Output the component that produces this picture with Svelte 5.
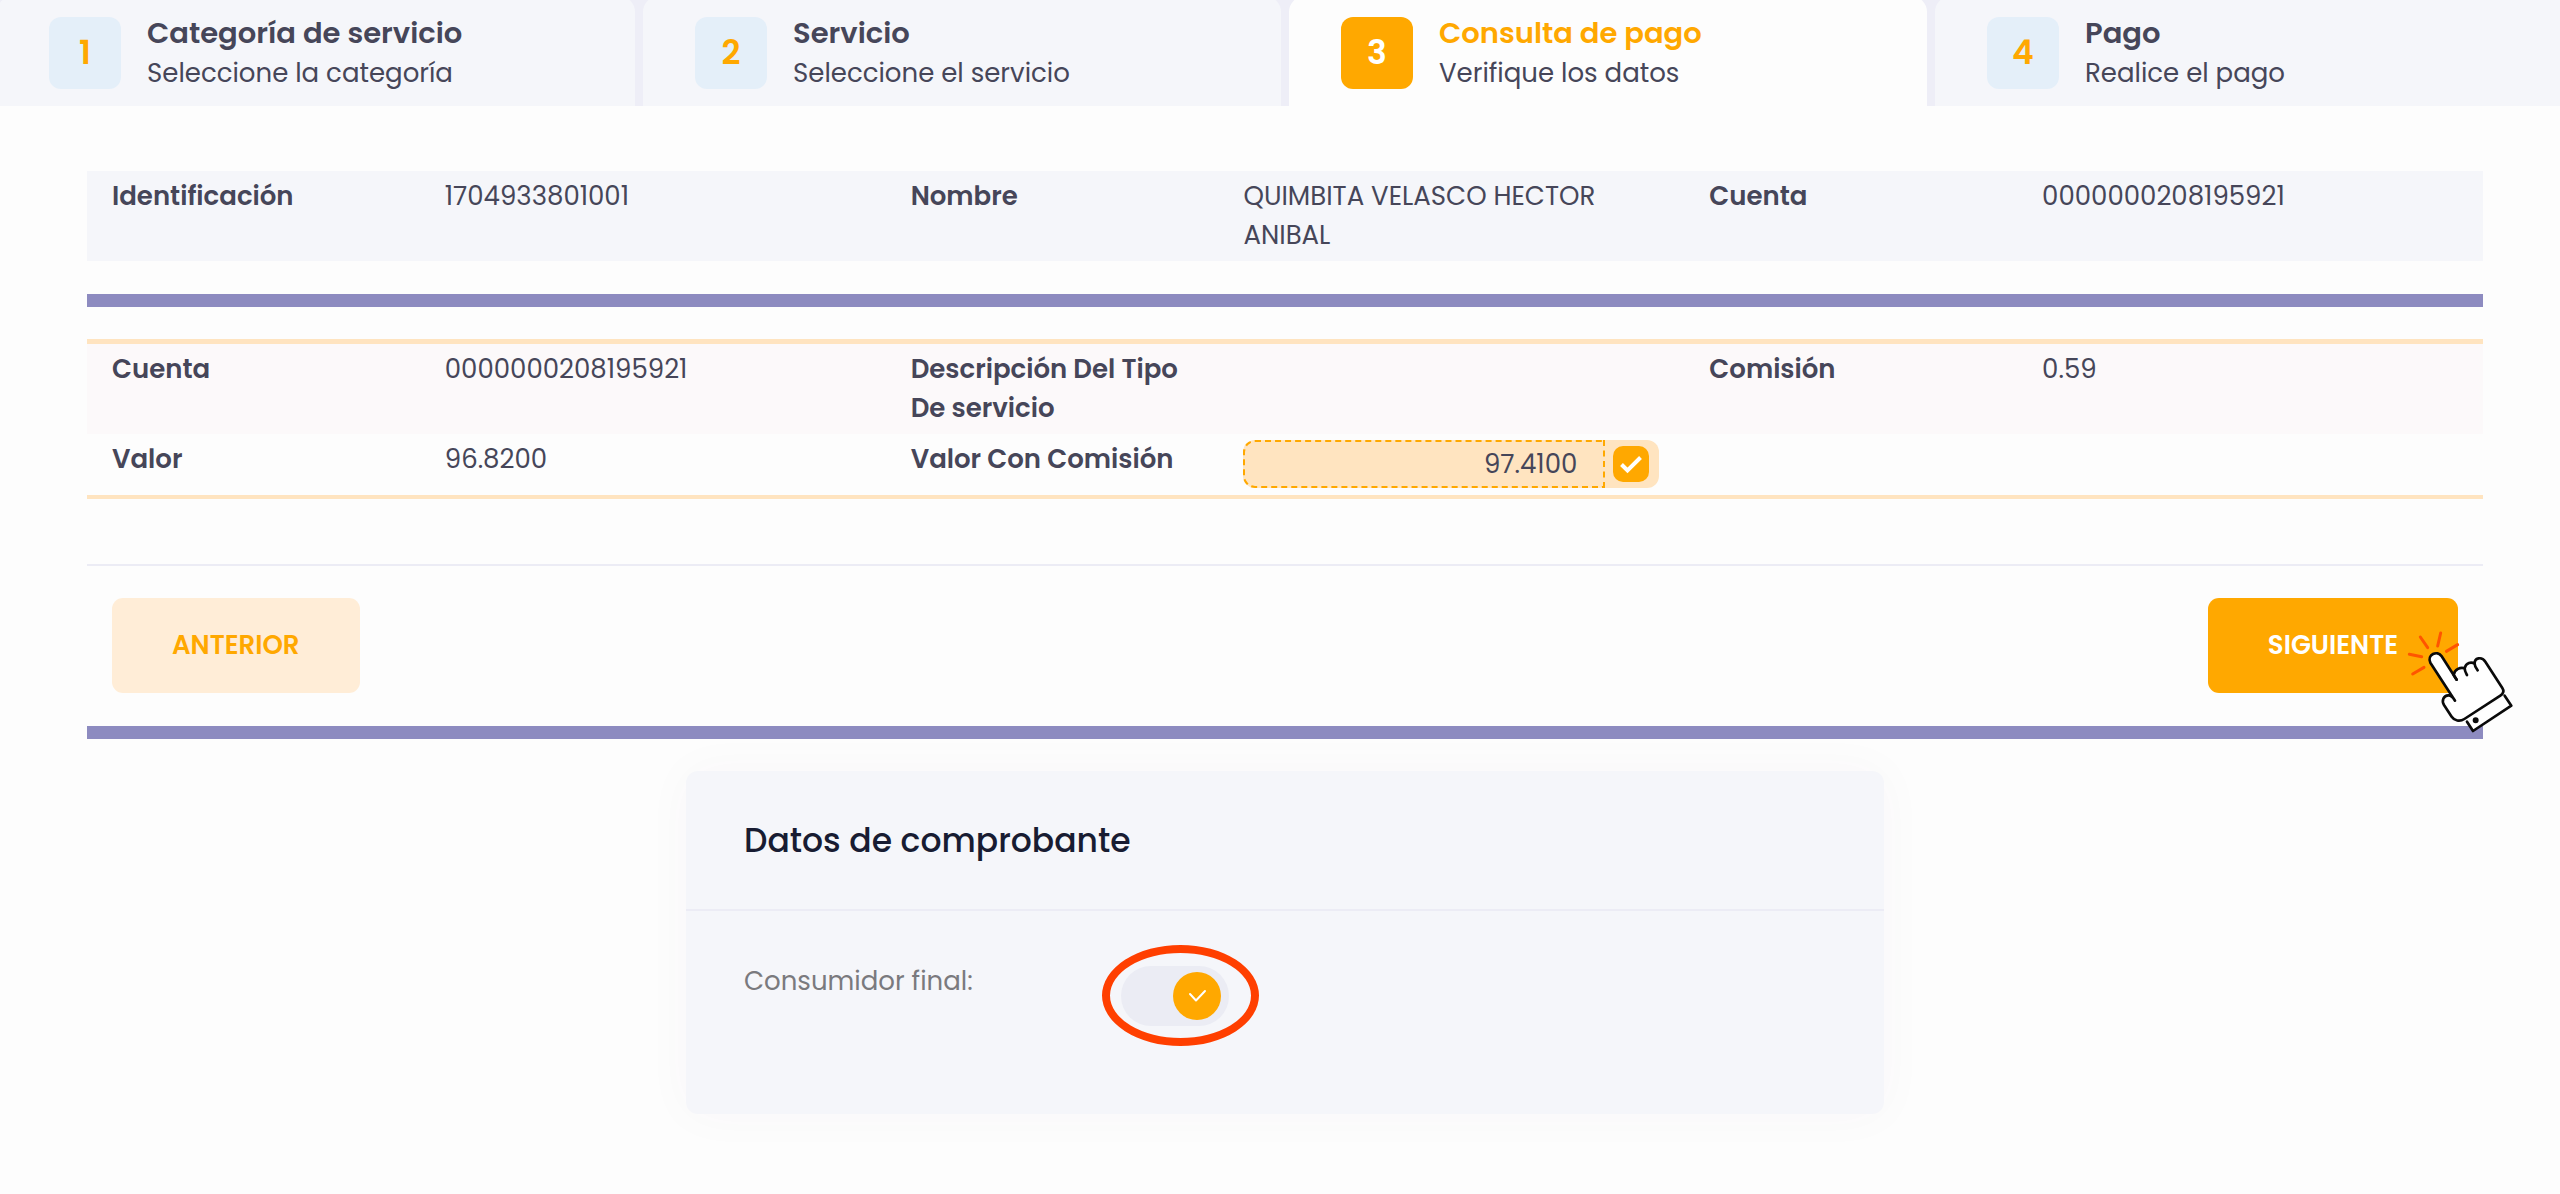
<script>
	const steps = [
		{ title: 'Categoría de servicio', hint: 'Seleccione la categoría' },
		{ title: 'Servicio', hint: 'Seleccione el servicio' },
		{ title: 'Consulta de pago', hint: 'Verifique los datos' },
		{ title: 'Pago', hint: 'Realice el pago' }
	];

	const cliente = [
		['Identificación', '1704933801001'],
		['Nombre', 'QUIMBITA VELASCO HECTOR ANIBAL'],
		['Cuenta', '0000000208195921']
	];

	const detalle = [
		['Cuenta', '0000000208195921'],
		['Descripción Del Tipo De servicio', ''],
		['Comisión', '0.59']
	];

	let current = $state(2);
	let valor = $state('97.4100');
	let pagar = $state(true);
	let consumidorFinal = $state(true);
</script>

<div class="wizard">
	<nav>
		<ol class="steps">
			{#each steps as step, i}
				<li>
					<a
						href="#paso-{i + 1}"
						class="step"
						aria-current={i === current ? 'step' : undefined}
						onclick={() => (current = i)}
					>
						<span class="number">{i + 1}</span>
						<span class="text">
							<strong>{step.title}</strong>
							<span>{step.hint}</span>
						</span>
					</a>
				</li>
			{/each}
		</ol>
	</nav>

	<main>
		<dl class="row shaded">
			{#each cliente as [label, value]}
				<dt>{label}</dt>
				<dd>{value}</dd>
			{/each}
		</dl>

		<div class="bar"></div>

		<dl class="detail">
			<div class="row tinted">
				{#each detalle as [label, value]}
					<dt>{label}</dt>
					<dd>{value}</dd>
				{/each}
			</div>
			<div class="row">
				<dt>Valor</dt>
				<dd>96.8200</dd>
				<dt><label for="valor">Valor Con Comisión</label></dt>
				<dd class="amount">
					<input id="valor" type="text" bind:value={valor} />
					<span class="tick">
						<input type="checkbox" aria-label="Pagar valor" bind:checked={pagar} />
						<svg viewBox="0 0 36 36" aria-hidden="true">
							<path d="M8.5 18.5 14.5 24.5 27.5 11.5" />
						</svg>
					</span>
				</dd>
			</div>
		</dl>

		<div class="actions">
			<button type="button" class="prev">ANTERIOR</button>
			<div class="next-wrap">
				<button type="button" class="next">SIGUIENTE</button>
				<svg class="pointer" viewBox="680 210 321 309" aria-hidden="true">
					<g class="rays">
						<path d="M720 231 742 263M781 219 772 258M832 254 798 274M687 283 724 290M697 342 731 322" />
					</g>
					<g class="hand">
						<path d="M860 485 878 513 993 437 973 407" />
						<path d="M829 359 784 289C771 269 739 284 750 308L824 422C812 400 795 404 789 416C786 423 788 430 791 435L814 470C822 482 838 486 852 477L960 407C969 401 972 393 966 384L915 305C904 288 882 294 883 311C873 305 857 307 853 325C841 320 822 328 820 345Z" />
						<path d="M829 359 820 345M853 325C853 334 856 338 860 345M883 311C883 320 887 325 892 331" />
						<circle cx="886" cy="481" r="5" />
					</g>
				</svg>
			</div>
		</div>

		<div class="bar"></div>

		<section class="card">
			<h2>Datos de comprobante</h2>
			<div class="field">
				<label for="consumidor">Consumidor final:</label>
				<div>
					<span class="switch">
						<input id="consumidor" type="checkbox" role="switch" bind:checked={consumidorFinal} />
						<svg viewBox="0 0 48 48" aria-hidden="true">
							<path d="M17 22 23 28.5 32 19" />
						</svg>
						<span class="ring"></span>
					</span>
				</div>
			</div>
		</section>
	</main>
</div>

<style>
	:global(body) {
		margin: 0;
		background: #fdfdfd;
	}

	.wizard {
		overflow: hidden;
		font-family: Poppins, Inter, sans-serif;
		font-size: 26px;
		line-height: 39px;
		color: #464659;
	}

	/* the stepper bleeds past both edges of the frame */
	.steps {
		display: flex;
		gap: 8px;
		margin: -4px -13px 0 -3px;
		padding: 0;
		list-style: none;
		background: #eeeef7;
	}

	li {
		flex: 1;
	}

	.step {
		display: flex;
		align-items: center;
		gap: 26px;
		padding: 16px 52px 13px;
		border-radius: 16px 16px 0 0;
		background: #f5f6fa;
		color: inherit;
		text-decoration: none;
	}

	.number {
		display: flex;
		align-items: center;
		justify-content: center;
		width: 72px;
		height: 72px;
		border-radius: 12px;
		background: #e4eff9;
		color: #ffa800;
		font-size: 33px;
		font-weight: 600;
	}

	.text {
		display: flex;
		flex-direction: column;
	}

	.text strong {
		font-size: 29px;
		font-weight: 600;
		line-height: 42px;
	}

	[aria-current] {
		background: #fdfdfd;
	}

	[aria-current] .number {
		background: #ffa800;
		color: #fff;
	}

	[aria-current] strong {
		color: #ffa800;
	}

	main {
		padding: 65px 77px 80px 87px;
	}

	dl,
	dd {
		margin: 0;
	}

	.row {
		display: grid;
		grid-template-columns: repeat(3, minmax(0, 5fr) minmax(0, 7fr));
		padding: 6px 0;
	}

	dt,
	dd {
		padding: 0 25px;
	}

	dt {
		font-weight: 600;
	}

	.shaded {
		background: #f5f6fa;
	}

	.tinted {
		background: #fcf9fa;
	}

	.bar {
		height: 13px;
		margin: 33px 0 32px;
		background: #8d8bc0;
	}

	.detail {
		padding-bottom: 1px;
		border-top: 5px solid #ffe4c0;
		border-bottom: 4px solid #ffe4c0;
	}

	.amount {
		display: flex;
		height: 48px;
	}

	.amount input[type='text'] {
		flex: 1;
		min-width: 0;
		box-sizing: border-box;
		padding: 0 26px;
		border: 2px dashed #ffa800;
		border-radius: 12px 0 0 12px;
		background: #ffe4c0;
		color: inherit;
		font: inherit;
		text-align: right;
	}

	.tick,
	.switch {
		position: relative;
		display: inline-grid;
	}

	.tick {
		padding: 6px 10px 6px 8px;
		border-radius: 0 12px 12px 0;
		background: #ffe4c0;
	}

	.tick input {
		grid-area: 1 / 1;
		appearance: none;
		width: 36px;
		height: 36px;
		margin: 0;
		border-radius: 10px;
		background: #ffa800;
	}

	.tick svg {
		grid-area: 1 / 1;
		z-index: 1;
		width: 36px;
		height: 36px;
		fill: none;
		stroke: #fff;
		stroke-width: 4;
		pointer-events: none;
	}

	input:not(:checked) + svg {
		visibility: hidden;
	}

	.actions {
		display: flex;
		justify-content: space-between;
		margin-top: 65px;
		padding: 32px 25px 0;
		border-top: 2px solid #ececf5;
	}

	button {
		padding: 28px 60px;
		border: 0;
		border-radius: 11px;
		font: inherit;
		font-weight: 600;
	}

	.prev {
		background: #ffedd7;
		color: #ffa800;
	}

	.next {
		background: #ffa800;
		color: #fff;
	}

	.next-wrap {
		position: relative;
	}

	.pointer {
		position: absolute;
		right: -56px;
		top: 32px;
		width: 107px;
		height: 103px;
		stroke-linecap: round;
		stroke-linejoin: round;
		pointer-events: none;
	}

	.rays {
		fill: none;
		stroke: #ff5500;
		stroke-width: 9;
	}

	.hand {
		fill: #fff;
		stroke: #0a0a0a;
		stroke-width: 8;
	}

	.hand circle {
		fill: #0a0a0a;
	}

	.card {
		width: 50%;
		margin: 0 auto;
		border-radius: 12px;
		background: #f5f6fa;
		box-shadow: 0 0 50px rgba(82, 63, 105, 0.03);
	}

	h2 {
		margin: 0;
		padding: 50px 58px 49px;
		border-bottom: 2px solid #ececf5;
		color: #181c32;
		font-size: 33px;
		font-weight: 500;
	}

	.field {
		display: grid;
		grid-template-columns: 1fr 2fr;
		padding: 51px 33px 88px;
	}

	.field > * {
		padding: 0 25px;
	}

	.field label {
		color: #7a7a7e;
	}

	.switch {
		margin-top: 4px;
		vertical-align: top;
	}

	.switch input {
		grid-area: 1 / 1;
		appearance: none;
		display: flex;
		align-items: center;
		box-sizing: border-box;
		width: 108px;
		height: 60px;
		margin: 0;
		padding: 0 8px;
		border-radius: 30px;
		background: #ebecf4;
	}

	.switch input::before {
		content: '';
		width: 48px;
		height: 48px;
		border-radius: 50%;
		background: #ffa800;
	}

	.switch input:checked::before {
		margin-left: auto;
	}

	.switch svg {
		grid-area: 1 / 1;
		z-index: 1;
		align-self: center;
		justify-self: end;
		width: 48px;
		height: 48px;
		margin-right: 8px;
		fill: none;
		stroke: #fff;
		stroke-width: 2;
		stroke-linecap: round;
		stroke-linejoin: round;
		pointer-events: none;
	}

	.ring {
		position: absolute;
		inset: -21px -30px -20px -19px;
		border: 8px solid #ff3f00;
		border-radius: 50%;
		pointer-events: none;
	}
</style>
